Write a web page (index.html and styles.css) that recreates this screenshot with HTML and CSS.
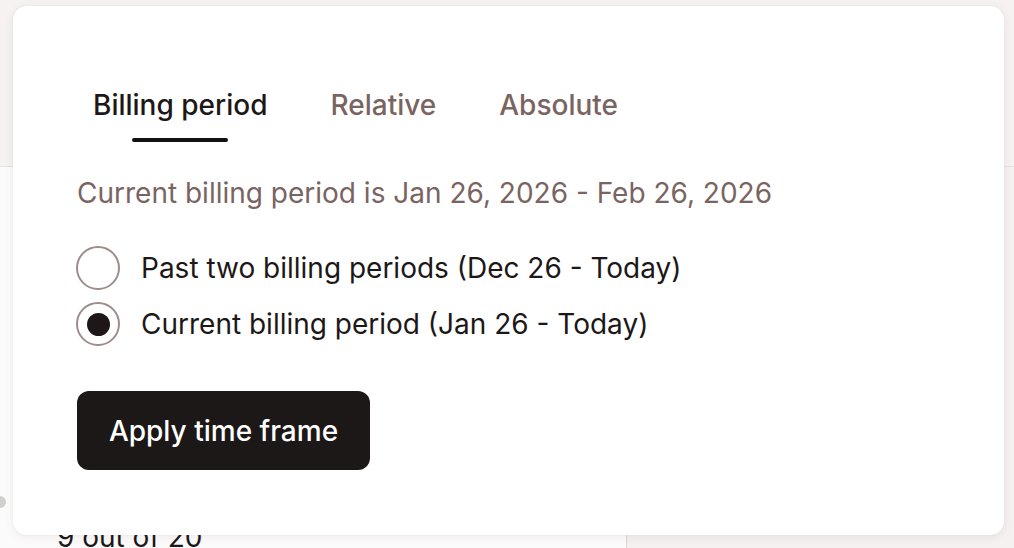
FILE: index.html
```html
<!DOCTYPE html>
<html lang="en">
<head>
<meta charset="utf-8">
<title>Time frame</title>
<link rel="stylesheet" href="styles.css">
</head>
<body>
<div class="page">
  <header class="topbar"></header>
  <main class="main">
    <section class="left-col">
      <div class="spacer"></div>
      <div class="dot-row"><span class="dot"></span></div>
      <div class="usage">9 out of 20</div>
    </section>
    <section class="right-col"></section>
  </main>

  <div class="popover">
    <nav class="tabs">
      <div class="tab active"><span class="tab-label">Billing period</span><span class="tab-bar"></span></div>
      <div class="tab"><span class="tab-label">Relative</span></div>
      <div class="tab"><span class="tab-label">Absolute</span></div>
    </nav>
    <p class="subtitle">Current billing period is Jan 26, 2026 - Feb 26, 2026</p>
    <div class="options">
      <label class="option"><span class="radio"></span><span class="option-text">Past two billing periods (Dec 26 - Today)</span></label>
      <label class="option"><span class="radio checked"></span><span class="option-text">Current billing period (Jan 26 - Today)</span></label>
    </div>
    <button class="apply">Apply time frame</button>
  </div>
</div>
</body>
</html>
```

FILE: styles.css
```css
html, body {
  margin: 0;
  padding: 0;
}
body {
  width: 1014px;
  height: 548px;
  overflow: hidden;
  font-family: Inter, "Noto Sans", sans-serif;
  color: #1d1817;
  background: #ffffff;
}
.page {
  position: relative;
  width: 1014px;
  height: 548px;
  display: flex;
  flex-direction: column;
}
.topbar {
  height: 166px;
  flex: none;
  background: #f6f2f2;
  border-bottom: 1px solid #e7e1e1;
}
.main {
  flex: 1;
  display: grid;
  grid-template-columns: 627px 1fr;
}
.left-col {
  background: #fcfbfb;
  border-right: 1px solid #dbd5d5;
  padding-left: 57px;
}
.right-col {
  background: #f5f1f1;
}
.spacer {
  height: 329px;
}
.dot-row {
  height: 12px;
}
.dot {
  display: block;
  width: 12px;
  height: 12px;
  margin-left: -63px;
  border-radius: 50%;
  background: #d3cfcf;
}
.usage {
  margin-top: 12px;
  font-size: 28px;
  line-height: 34px;
  color: #1d1817;
}

.popover {
  position: absolute;
  left: 13px;
  top: 6px;
  width: 991px;
  height: 529px;
  box-sizing: border-box;
  background: #ffffff;
  border-radius: 14px;
  box-shadow: 0 2px 10px rgba(60, 40, 40, 0.08), 0 0 2px rgba(60, 40, 40, 0.06);
  padding: 82px 64px 0 64px;
}
.tabs {
  display: flex;
  align-items: flex-start;
  gap: 31px;
}
.tab {
  display: flex;
  flex-direction: column;
  align-items: center;
  padding: 0 16px;
  font-size: 28px;
  line-height: 34px;
  font-weight: 500;
  color: #7a6462;
}
.tab.active {
  color: #1d1817;
}
.tab-bar {
  display: block;
  width: 96px;
  height: 4px;
  margin-top: 16px;
  border-radius: 2px;
  background: #111;
}
.subtitle {
  margin: 34px 0 0 0;
  font-size: 28px;
  line-height: 34px;
  color: #7a6462;
}
.options {
  margin-top: 36px;
  display: flex;
  flex-direction: column;
  gap: 12px;
}
.option {
  display: flex;
  align-items: center;
  gap: 21px;
  height: 44px;
  margin-left: -1px;
  font-size: 28px;
  line-height: 34px;
  color: #1d1817;
}
.radio {
  flex: none;
  width: 44px;
  height: 44px;
  box-sizing: border-box;
  border: 2px solid #9d8e8d;
  border-radius: 50%;
  display: flex;
  align-items: center;
  justify-content: center;
}
.radio.checked::after {
  content: "";
  width: 23px;
  height: 23px;
  border-radius: 50%;
  background: #1d1817;
}
.apply {
  display: block;
  margin-top: 45px;
  width: 293px;
  height: 79px;
  border: 0;
  border-radius: 12px;
  background: #1c1817;
  color: #ffffff;
  font-family: Inter, "Noto Sans", sans-serif;
  font-size: 28px;
  font-weight: 500;
  padding: 0;
}
```
